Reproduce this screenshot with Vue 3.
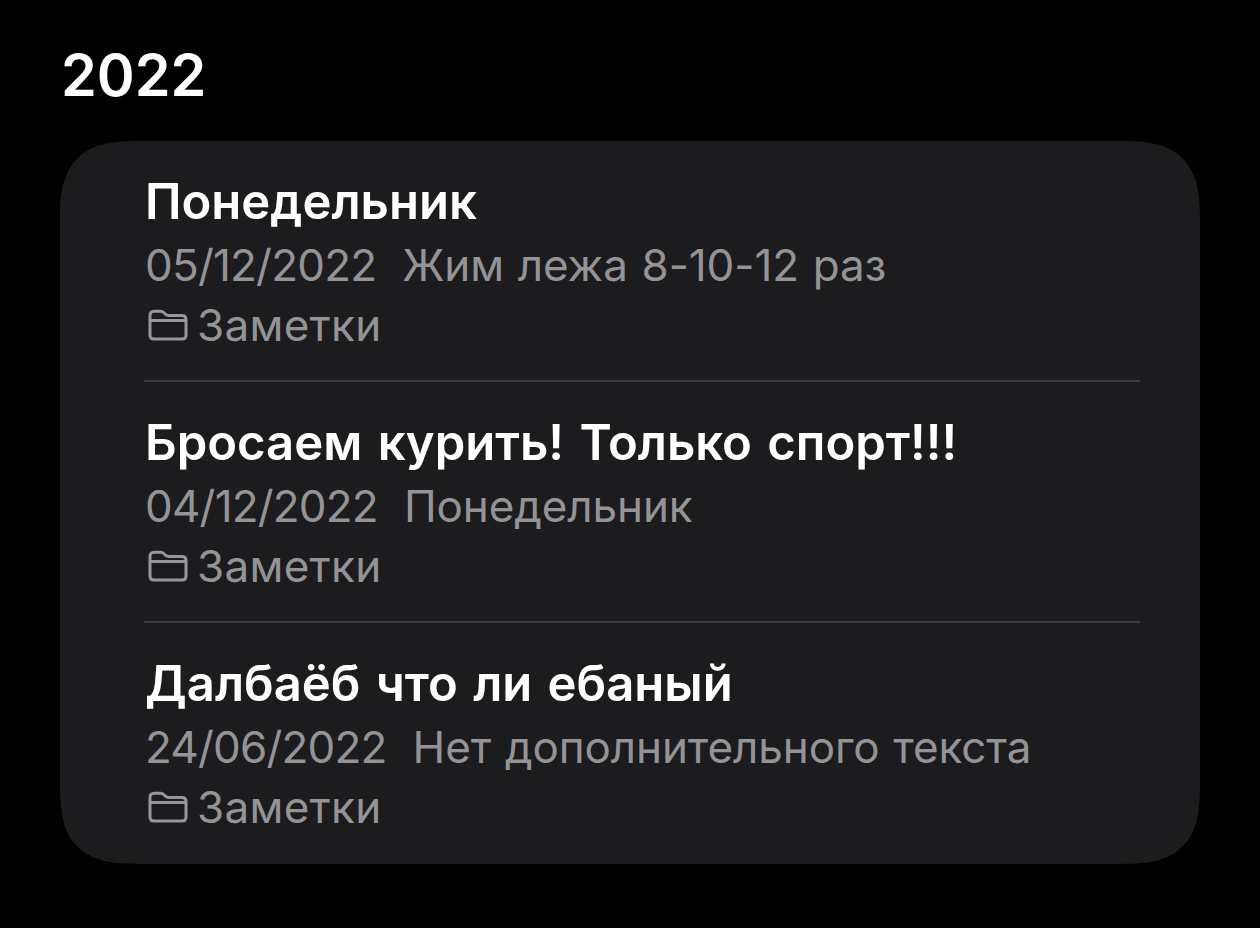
<template>
  <div class="page">
    <h1 class="year">2022</h1>
    <div class="card">
      <div v-for="(n, i) in notes" :key="i" class="note" :class="{ last: i === notes.length - 1 }">
        <div class="title">{{ n.title }}</div>
        <div class="meta">
          <span class="date">{{ n.date }}</span>
          <span class="preview">{{ n.text }}</span>
        </div>
        <div class="folder">
          <svg width="40" height="32" viewBox="0 0 40 32" fill="none" stroke="#98989c" stroke-width="3" stroke-linejoin="round" stroke-linecap="round">
            <path d="M2 6.5C2 3.8 3.6 2.2 6 2.2H12.5C14.2 2.2 15 2.8 16.2 4L17.6 5.3C18.5 6.2 19.2 6.5 20.6 6.5H34C36.6 6.5 38 8 38 10.5V26C38 28.6 36.6 30 34 30H6C3.4 30 2 28.6 2 26Z" />
            <path d="M3 11.6H37" />
          </svg>
          <span class="folder-name">Заметки</span>
        </div>
      </div>
    </div>
  </div>
</template>

<script setup>
const notes = [
  { title: "Понедельник", date: "05/12/2022", text: "Жим лежа 8-10-12 раз" },
  { title: "Бросаем курить! Только спорт!!!", date: "04/12/2022", text: "Понедельник" },
  { title: "Далбаёб что ли ебаный", date: "24/06/2022", text: "Нет дополнительного текста" }
]
</script>

<style>
html, body { background: #000; }
</style>

<style scoped>
.page {
  width: 1260px;
  height: 928px;
  overflow: hidden;
  box-sizing: border-box;
  padding: 39px 60px 0;
  background: #000;
  font-family: Inter, "Noto Sans", sans-serif;
}
.year {
  margin: 0 0 30px 1px;
  font-size: 57.5px;
  line-height: 72px;
  font-weight: 600;
  color: #fff;
}
.card {
  width: 1140px;
  height: 723px;
  box-sizing: border-box;
  padding: 0 60px 0 84px;
  background: #1c1c1e;
  border-radius: 80px;
  corner-shape: superellipse(1.5);
}
.note {
  height: 241px;
  box-sizing: border-box;
  padding-top: 31px;
  border-bottom: 2px solid #3a3a3c;
}
.note.last { border-bottom: none; }
.title {
  padding-left: 1px;
  font-size: 49px;
  line-height: 60px;
  font-weight: 600;
  word-spacing: 3px;
  color: #fff;
  white-space: nowrap;
}
.meta {
  display: flex;
  gap: 26px;
  padding-left: 1px;
  margin-top: 3px;
  font-size: 44px;
  line-height: 60px;
  color: #949497;
  white-space: nowrap;
}
.date { letter-spacing: -0.8px; }
.preview { letter-spacing: -0.1px; word-spacing: 1.5px; }
.folder {
  display: flex;
  align-items: center;
  gap: 9px;
  padding-left: 4px;
  font-size: 44px;
  line-height: 60px;
  color: #949497;
}
.folder-name { letter-spacing: 0.3px; }
</style>
